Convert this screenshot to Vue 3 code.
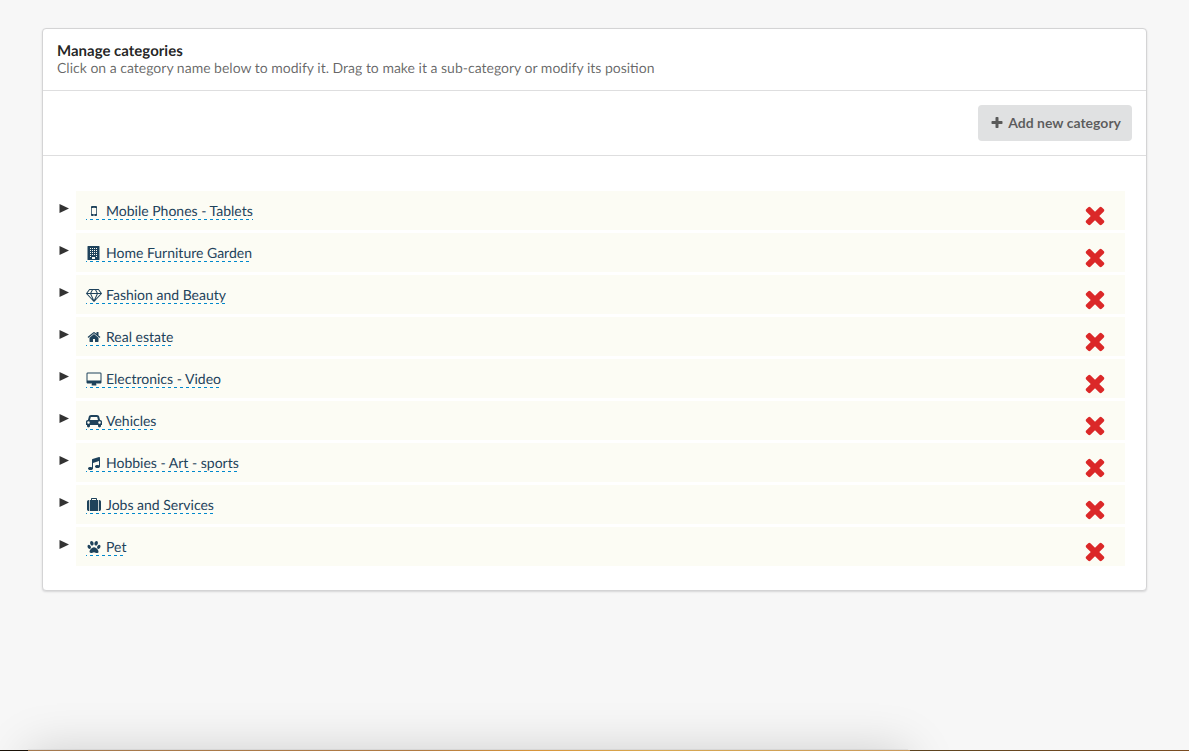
<script setup>
import { ref } from 'vue'

const icons = {
  plus: {
    box: '0 0 1792 1792',
    d: 'M1600 736v192q0 40-28 68t-68 28h-416v416q0 40-28 68t-68 28h-192q-40 0-68-28t-28-68v-416h-416q-40 0-68-28t-28-68v-192q0-40 28-68t68-28h416v-416q0-40 28-68t68-28h192q40 0 68 28t28 68v416h416q40 0 68 28t28 68z'
  },
  times: {
    box: '0 0 1792 1792',
    d: 'M1490 1322q0 40-28 68l-136 136q-28 28-68 28t-68-28l-294-294-294 294q-28 28-68 28t-68-28l-136-136q-28-28-28-68t28-68l294-294-294-294q-28-28-28-68t28-68l136-136q28-28 68-28t68 28l294 294 294-294q28-28 68-28t68 28l136 136q28 28 28 68t-28 68l-294 294 294 294q28 28 28 68z'
  },
  mobile: {
    box: '-128 0 2048 1792',
    d: 'M976 1408q0-33-23.500-56.500t-56.500-23.500-56.500 23.500-23.500 56.500 23.500 56.500 56.500 23.500 56.500-23.500 23.500-56.500zm208-160v-704q0-13-9.500-22.500t-22.500-9.500h-512q-13 0-22.500 9.500t-9.500 22.500v704q0 13 9.500 22.500t22.500 9.500h512q13 0 22.500-9.500t9.500-22.500zm-192-848q0-16-16-16h-160q-16 0-16 16t16 16h160q16 0 16-16zm288-16v1024q0 52-38 90t-90 38h-512q-52 0-90-38t-38-90v-1024q0-52 38-90t90-38h512q52 0 90 38t38 90z'
  },
  building: {
    box: '-64 0 2048 1792',
    d: 'M192 0h1408q64 0 64 64v1664q0 64-64 64h-1408q-64 0-64-64v-1664q0-64 64-64z' +
      [256, 512, 768, 1024].map(y =>
        [448, 704, 960, 1216].map(x => `M${x} ${y}v128h128v-128z`).join('')
      ).join('') +
      'M448 1280v128h128v-128zM1216 1280v128h128v-128zM704 1408v256h384v-256z'
  },
  diamond: {
    box: '0 0 2048 1792',
    d: 'M212 768l623 665-300-665h-323zm812 772l349-772h-698zM538 640l204-384h-262l-288 384h346zm675 793l623-665h-323zM683 640h682l-204-384h-274zm827 0h346l-288-384h-262zm141-486l384 512q14 18 13 41.500t-17 40.500l-960 1024q-18 20-47 20t-47-20l-960-1024q-16-17-17-40.500t13-41.500l384-512q18-26 51-26h1152q33 0 51 26z'
  },
  home: {
    box: '-128 0 2048 1792',
    d: 'M1472 992v480q0 26-19 45t-45 19h-384v-384h-256v384h-384q-26 0-45-19t-19-45v-480l1-6 575-474 575 474q1 2 1 6zm223-69l-62 74q-8 9-21 11h-3q-13 0-21-7l-692-577-692 577q-12 8-24 7-13-2-21-11l-62-74q-8-10-7-23.500t11-21.500l719-599q32-26 76-26t76 26l244 204v-195q0-14 9-23t23-9h192q14 0 23 9t9 23v408l219 182q10 8 11 21.500t-7 23.500z'
  },
  desktop: {
    box: '-128 -64 2048 1792',
    d: 'M1728 992v-832q0-13-9.500-22.500t-22.500-9.500h-1600q-13 0-22.500 9.500t-9.500 22.500v832q0 13 9.500 22.500t22.500 9.500h1600q13 0 22.500-9.500t9.500-22.500zm128-832v1088q0 66-47 113t-113 47h-544q0 37 16 77.500t32 71 16 43.500q0 26-19 45t-45 19h-512q-26 0-45-19t-19-45q0-14 16-44t32-70 16-78h-544q-66 0-113-47t-47-113v-1088q0-66 47-113t113-47h1600q66 0 113 47t47 113z'
  },
  car: {
    box: '0 0 2048 1792',
    d: 'M480 1088q0-66-47-113t-113-47-113 47-47 113 47 113 113 47 113-47 47-113zm36-320h1016l-89-357q-2-8-14-17.500t-21-9.500h-768q-9 0-21 9.500t-14 17.500zm1372 320q0-66-47-113t-113-47-113 47-47 113 47 113 113 47 113-47 47-113zm160-96v384q0 14-9 23t-23 9h-96v128q0 80-56 136t-136 56-136-56-56-136v-128h-1024v128q0 80-56 136t-136 56-136-56-56-136v-128h-96q-14 0-23-9t-9-23v-384q0-93 65.500-158.500t158.500-65.500h28l105-419q23-94 104-157.500t179-63.500h768q98 0 179 63.500t104 157.500l105 419h28q93 0 158.500 65.500t65.500 158.500z'
  },
  music: {
    box: '-128 0 2048 1792',
    d: 'M1664 224v1120q0 50-34 89t-86 60.500-103.500 32-96.500 10.500-96.500-10.500-103.500-32-86-60.500-34-89 34-89 86-60.500 103.500-32 96.500-10.500q105 0 192 39v-537l-768 237v709q0 50-34 89t-86 60.500-103.500 32-96.500 10.500-96.500-10.500-103.500-32-86-60.500-34-89 34-89 86-60.500 103.500-32 96.500-10.500q105 0 192 39v-967q0-31 19-56.500t49-35.500l832-256q12-4 28-4 40 0 68 28t28 68z'
  },
  suitcase: {
    box: '-128 0 2048 1792',
    d: 'M640 256h512v-128h-512v128zm-352 0v1408h-64q-92 0-158-66t-66-158v-960q0-92 66-158t158-66h64zm1120 0v1408h-1024v-1408h128v-160q0-40 28-68t68-28h576q40 0 68 28t28 68v160h128zm384 224v960q0 92-66 158t-158 66h-64v-1408h64q92 0 158 66t66 158z'
  },
  paw: {
    box: '-192 0 2048 1792',
    d: 'M780 472q0 60-19 113.500t-63 92.500-105 39q-76 0-138-57.500t-92-135.500-30-151q0-60 19-113.500t63-92.500 105-39q77 0 138.500 57.500t91.500 135 30 151.500zm-342 483q0 80-42 139t-119 59q-76 0-141.500-55.500t-100.500-133.500-35-152q0-80 42-139.500t119-59.500q76 0 141.500 55.500t100.500 134 35 152.500zm394-27q118 0 255 97.500t229 237 92 254.500q0 46-17 76.500t-48.500 45-64.500 20-76 5.500q-68 0-187.500-45t-182.500-45q-66 0-192.500 44.500t-200.500 44.500q-183 0-183-146 0-86 56-191.500t139.500-192.500 187.500-146 193-59zm239-211q-61 0-105-39t-63-92.500-19-113.500q0-74 30-151.500t91.500-135 138.500-57.500q61 0 105 39t63 92.500 19 113.500q0 73-30 151t-92 135.500-138 57.500zm432-104q77 0 119 59.500t42 139.500q0 74-35 152t-100.500 133.500-141.500 55.500q-77 0-119-59t-42-139q0-74 35-152.500t100.500-134 141.500-55.500z'
  }
}

const categories = ref([
  { name: 'Mobile Phones - Tablets', icon: 'mobile' },
  { name: 'Home Furniture Garden', icon: 'building' },
  { name: 'Fashion and Beauty', icon: 'diamond' },
  { name: 'Real estate', icon: 'home' },
  { name: 'Electronics - Video', icon: 'desktop' },
  { name: 'Vehicles', icon: 'car' },
  { name: 'Hobbies - Art - sports', icon: 'music' },
  { name: 'Jobs and Services', icon: 'suitcase' },
  { name: 'Pet', icon: 'paw' }
])

function remove(index) {
  categories.value.splice(index, 1)
}
</script>

<template>
  <div class="page">
    <main class="card">
      <header class="section heading">
        <h1>Manage categories</h1>
        <p>Click on a category name below to modify it. Drag to make it a sub-category or modify its position</p>
      </header>
      <div class="section toolbar">
        <button type="button" class="add">
          <svg class="plus" :viewBox="icons.plus.box" aria-hidden="true"><path :d="icons.plus.d" /></svg>
          <span>Add new category</span>
        </button>
      </div>
      <ul class="tree">
        <li v-for="(category, index) in categories" :key="category.name" class="node">
          <button type="button" class="toggle" :aria-label="`Expand ${category.name}`">
            <svg class="arrow" viewBox="0 0 10 10" aria-hidden="true"><path d="M0.500 0L10 4.500L0.500 9z" /></svg>
          </button>
          <div class="row">
            <a href="#" class="name" @click.prevent>
              <svg class="glyph" :viewBox="icons[category.icon].box" aria-hidden="true">
                <path fill-rule="evenodd" :d="icons[category.icon].d" />
              </svg>
              <span>{{ category.name }}</span>
            </a>
            <button type="button" class="remove" :aria-label="`Delete ${category.name}`" @click="remove(index)">
              <svg class="cross" :viewBox="icons.times.box" aria-hidden="true"><path :d="icons.times.d" /></svg>
            </button>
          </div>
        </li>
      </ul>
    </main>
    <div class="dock"></div>
    <div class="edge"></div>
  </div>
</template>

<style>
body {
  background: #f7f7f7;
}
</style>

<style scoped>
.page {
  position: relative;
  box-sizing: border-box;
  min-height: 100vh;
  padding: 28px 42px;
  overflow: hidden;
  background: #f7f7f7;
  color: rgba(0, 0, 0, 0.87);
  font-family: Lato, "Liberation Sans", sans-serif;
  font-size: 14px;
  line-height: 18px;
  text-rendering: geometricPrecision;
}

.page * {
  box-sizing: border-box;
}

svg {
  display: block;
  flex: none;
  fill: currentColor;
}

button {
  border: 0;
  padding: 0;
  background: none;
  color: inherit;
  font: inherit;
  cursor: pointer;
}

.card {
  background: #fff;
  border: 1px solid #d4d4d5;
  border-radius: 4px;
  box-shadow: 0 1px 2px rgba(34, 36, 38, 0.15);
}

.section {
  padding: 14px;
  border-bottom: 1px solid #dededf;
}

.heading {
  padding: 12px 14px 15px;
}

h1 {
  margin: 0;
  font-size: 15px;
  font-weight: 700;
  line-height: 20px;
}

p {
  margin: 0;
  color: rgba(0, 0, 0, 0.6);
  line-height: 14px;
}

.toolbar {
  display: flex;
  justify-content: flex-end;
}

.add {
  display: flex;
  align-items: center;
  gap: 4px;
  height: 36px;
  padding: 0 11px 1px 12px;
  border-radius: 4px;
  background: #e0e1e2;
  color: rgba(0, 0, 0, 0.6);
  font-weight: 700;
}

.plus {
  width: 14px;
  height: 14px;
}

.tree {
  display: flex;
  flex-direction: column;
  gap: 3px;
  margin: 0;
  padding: 35px 21px 24px 16px;
  list-style: none;
}

.node {
  display: flex;
  align-items: flex-start;
}

.toggle {
  width: 17px;
  padding-top: 13px;
  color: #333;
}

.arrow {
  width: 10px;
  height: 10px;
}

.row {
  display: flex;
  flex: 1;
  align-items: flex-start;
  justify-content: space-between;
  height: 39px;
  padding: 10px 16px 0 10px;
  background: #fcfcf4;
}

.name {
  display: flex;
  align-items: center;
  gap: 4px;
  height: 19px;
  padding: 2px 0 1px;
  background: repeating-linear-gradient(90deg, #0088cc 0 1px, transparent 1px 4px, #0088cc 4px 6px) left bottom / 100% 1px no-repeat;
  color: #1e425b;
  text-decoration: none;
}

.glyph {
  width: 16px;
  height: 14px;
}

.remove {
  color: #db2828;
}

.cross {
  width: 28px;
  height: 28px;
}

.dock {
  position: absolute;
  top: calc(100% - 1px);
  left: 28px;
  width: 74%;
  height: 200px;
  box-shadow: 0 0 45px rgba(0, 0, 0, 0.17), 0 0 1px rgba(0, 0, 0, 0.3);
}

.edge {
  position: absolute;
  bottom: 0;
  left: 0;
  width: 100%;
  height: 1px;
  background: linear-gradient(90deg, #1a1208 28px, #a4794f 28px, #b07a42 35%, #d8953a 45%, #d8a850 55%, #c99a5c 910px, #5c431f 910px, #7a4d22);
}
</style>
